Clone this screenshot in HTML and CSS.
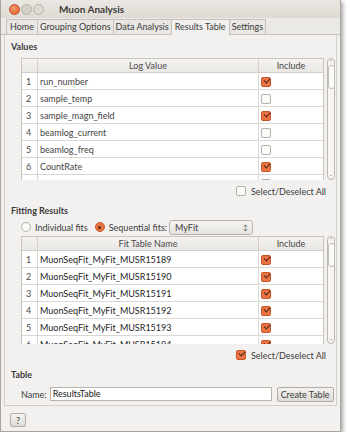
FILE: index.html
```html
<!DOCTYPE html>
<html lang="en">
<head>
  <meta charset="UTF-8">
  <title>Muon Analysis</title>
  <link rel="stylesheet" href="styles.css">
</head>
<body>
  <div class="window">
    <div class="titlebar">
      <span class="wbtn close"></span>
      <span class="wbtn"></span>
      <span class="wbtn max"></span>
      <span class="title">Muon Analysis</span>
    </div>

    <div class="tabs">
      <div class="tab">Home</div>
      <div class="tab">Grouping Options</div>
      <div class="tab">Data Analysis</div>
      <div class="tab active">Results Table</div>
      <div class="tab">Settings</div>
    </div>

    <div class="pane">
      <!-- Values -->
      <div class="group-title">Values</div>
      <div class="table-row values">
        <div class="tbl">
          <table class="data">
            <tr><th class="num"></th><th>Log Value</th><th class="inc">Include</th></tr>
            <tr><td class="num">1</td><td>run_number</td><td class="inc"><span class="cb on"></span></td></tr>
            <tr><td class="num">2</td><td>sample_temp</td><td class="inc"><span class="cb"></span></td></tr>
            <tr><td class="num">3</td><td>sample_magn_field</td><td class="inc"><span class="cb on"></span></td></tr>
            <tr><td class="num">4</td><td>beamlog_current</td><td class="inc"><span class="cb"></span></td></tr>
            <tr><td class="num">5</td><td>beamlog_freq</td><td class="inc"><span class="cb"></span></td></tr>
            <tr><td class="num">6</td><td>CountRate</td><td class="inc"><span class="cb on"></span></td></tr>
            <tr><td class="num">7</td><td>FieldGroupIndex</td><td class="inc"><span class="cb"></span></td></tr>
          </table>
        </div>
        <div class="scroll"><span class="arrow">&#710;</span><span class="thumb"></span><span class="arrow down">&#711;</span></div>
      </div>
      <div class="selall"><span class="cb"></span>Select/Deselect All</div>

      <!-- Fitting results -->
      <div class="group-title">Fitting Results</div>
      <div class="radios">
        <span class="radio"></span><span class="rlabel">Individual fits</span>
        <span class="radio on"></span><span class="rlabel">Sequential fits:</span>
        <span class="combo">MyFit<span class="spin">&#8597;</span></span>
      </div>
      <div class="table-row fits">
        <div class="tbl">
          <table class="data">
            <tr><th class="num"></th><th>Fit Table Name</th><th class="inc">Include</th></tr>
            <tr><td class="num">1</td><td class="dark">MuonSeqFit_MyFit_MUSR15189</td><td class="inc"><span class="cb on"></span></td></tr>
            <tr><td class="num">2</td><td class="dark">MuonSeqFit_MyFit_MUSR15190</td><td class="inc"><span class="cb on"></span></td></tr>
            <tr><td class="num">3</td><td class="dark">MuonSeqFit_MyFit_MUSR15191</td><td class="inc"><span class="cb on"></span></td></tr>
            <tr><td class="num">4</td><td class="dark">MuonSeqFit_MyFit_MUSR15192</td><td class="inc"><span class="cb on"></span></td></tr>
            <tr><td class="num">5</td><td class="dark">MuonSeqFit_MyFit_MUSR15193</td><td class="inc"><span class="cb on"></span></td></tr>
            <tr><td class="num">6</td><td class="dark">MuonSeqFit_MyFit_MUSR15194</td><td class="inc"><span class="cb on"></span></td></tr>
          </table>
        </div>
        <div class="scroll"><span class="arrow">&#710;</span><span class="thumb"></span><span class="arrow down">&#711;</span></div>
      </div>
      <div class="selall"><span class="cb on"></span>Select/Deselect All</div>

      <!-- Table -->
      <div class="group-title">Table</div>
      <div class="name-row">
        <span class="name-label">Name:</span>
        <span class="name-input">ResultsTable</span>
        <span class="btn">Create Table</span>
      </div>
    </div>

    <div class="footer">
      <span class="btn help">?</span>
    </div>
  </div>
</body>
</html>
```

FILE: styles.css
```css
body {
  margin: 0;
  background: #ffffff;
  font-family: Lato, "Open Sans", sans-serif;
  font-size: 9px;
  color: #3c3c3c;
}
.window {
  width: 341px;
  height: 432px;
  background: #f2f1f0;
  border: 1px solid #a9a59e;
  border-top: none;
  box-shadow: 2px 2px 4px rgba(0,0,0,0.35);
  box-sizing: border-box;
  display: flex;
  flex-direction: column;
  overflow: hidden;
}
.titlebar {
  height: 18px;
  display: flex;
  align-items: center;
  padding-left: 8px;
  background: linear-gradient(#ebe8e3, #dedad3);
}
.wbtn {
  width: 9px;
  height: 9px;
  border-radius: 50%;
  background: #d4d0c9;
  border: 1px solid #b8b3ab;
  margin-right: 1px;
}
.wbtn.close {
  background: radial-gradient(circle at 40% 35%, #f49a6c, #e0562a);
  border-color: #c44d25;
}
.wbtn.max {
  background: #ddd9d2;
}
.title {
  margin-left: 14px;
  font-weight: bold;
  font-size: 10px;
  color: #3c3b37;
}
.tabs {
  height: 16px;
  display: flex;
  align-items: flex-end;
  padding-left: 5px;
  border-bottom: 1px solid #c6c2bb;
  background: #ebe9e6;
}
.tab {
  height: 14px;
  line-height: 14px;
  padding: 0 2px;
  border: 1px solid #c6c2bb;
  border-bottom: none;
  border-left: none;
  background: #e9e7e3;
  color: #3c3c3c;
  white-space: nowrap;
}
.tab:first-child {
  border-left: 1px solid #c6c2bb;
  padding: 0 3px;
}
.tab.active {
  height: 15px;
  padding: 0 3px;
  background: #f2f1f0;
  margin-bottom: -1px;
  border-left: 1px solid #c6c2bb;
  margin-left: -1px;
}
.pane {
  margin: 0 3px;
  padding: 6px 0 0 6px;
  border-left: 1px solid #d3cfc8;
  border-right: 1px solid #d3cfc8;
  border-bottom: 1px solid #d3cfc8;
  height: 371px;
  box-sizing: border-box;
}
.group-title {
  font-weight: bold;
  height: 12px;
  line-height: 12px;
  color: #3c3c3c;
}
.table-row {
  display: flex;
  margin: 5px 0 0 10px;
}
.tbl {
  width: 303px;
  overflow: hidden;
  border: 1px solid #c9c5be;
  border-bottom: none;
  background: #fff;
  box-sizing: border-box;
}
.values .tbl { height: 122px; }
.fits .tbl { height: 108px; }
.data {
  width: 100%;
  border-collapse: collapse;
  table-layout: fixed;
}
.data th {
  height: 13px;
  font-weight: normal;
  background: linear-gradient(#f4f3f1, #e9e7e4);
  border-right: 1px solid #d3cfc8;
  border-bottom: 1px solid #d3cfc8;
  padding: 0;
  color: #4a4a4a;
}
.data td {
  height: 16px;
  padding: 0 0 0 2px;
  border-right: 1px solid #dbd8d3;
  border-bottom: 1px solid #dbd8d3;
  white-space: nowrap;
  overflow: hidden;
  color: #444;
}
.data td.dark { color: #1e1e1e; }
.data .num {
  width: 11px;
  padding-left: 4px;
  color: #4a4a4a;
}
.data th.num { padding: 0; width: 15px; }
.data .inc {
  width: 64px;
  border-right: none;
}
.cb {
  display: inline-block;
  width: 8px;
  height: 8px;
  border: 1px solid #b5b1aa;
  border-radius: 2px;
  background: #fbfbfa;
  vertical-align: middle;
  position: relative;
}
.cb.on {
  background: #ec7444;
  border-color: #c9562b;
}
.cb.on::after {
  content: "";
  position: absolute;
  left: 2px;
  top: 0;
  width: 5px;
  height: 3px;
  border-left: 1px solid #4a2a1a;
  border-bottom: 1px solid #4a2a1a;
  transform: rotate(-45deg);
}
.scroll {
  width: 6px;
  margin-left: 3px;
  border: 1px solid #bdb8b0;
  border-radius: 4px;
  background: #f6f5f4;
  display: flex;
  flex-direction: column;
  align-items: center;
  font-size: 6px;
  line-height: 5px;
  color: #777;
}
.scroll .thumb {
  width: 5px;
  height: 22px;
  border: 1px solid #c2bdb5;
  border-radius: 3px;
  background: #fbfbfa;
  margin: 1px 0;
}
.scroll .arrow.down {
  margin-top: auto;
}
.selall {
  display: flex;
  align-items: center;
  justify-content: flex-end;
  height: 18px;
  margin: 2px 10px 5px 0;
}
.selall .cb {
  margin-right: 5px;
}
.radios {
  display: flex;
  align-items: center;
  height: 16px;
  margin: 2px 0 0 10px;
}
.radio {
  width: 8px;
  height: 8px;
  border: 1px solid #b5b1aa;
  border-radius: 50%;
  background: #fbfbfa;
  margin-right: 4px;
  position: relative;
}
.radio.on {
  background: #ec7444;
  border-color: #c9562b;
}
.radio.on::after {
  content: "";
  position: absolute;
  left: 2.5px;
  top: 2.5px;
  width: 3px;
  height: 3px;
  border-radius: 50%;
  background: #5a2a15;
}
.rlabel {
  margin-right: 7px;
}
.combo {
  width: 84px;
  height: 15px;
  line-height: 13px;
  border: 1px solid #b9b4ac;
  border-radius: 3px;
  background: linear-gradient(#f6f5f3, #e5e2de);
  padding-left: 5px;
  box-sizing: border-box;
  display: flex;
  justify-content: space-between;
  margin-left: -5px;
}
.spin {
  font-size: 7px;
  color: #666;
  padding-right: 4px;
}
.fits {
  margin-top: 1px;
}
.name-row {
  display: flex;
  align-items: center;
  height: 16px;
  margin: 5px 0 0 10px;
}
.name-label {
  margin-right: 3px;
}
.name-input {
  width: 222px;
  height: 14px;
  line-height: 12px;
  border: 1px solid #b9b4ac;
  background: #fff;
  padding-left: 2px;
  box-sizing: border-box;
  color: #222;
}
.btn {
  display: inline-block;
  height: 15px;
  line-height: 13px;
  border: 1px solid #b1aca4;
  border-radius: 2px;
  background: linear-gradient(#f4f3f1, #dfdcd7);
  padding: 0 3px;
  box-sizing: border-box;
  color: #3c3c3c;
  margin-left: 5px;
  white-space: nowrap;
}
.footer {
  padding: 7px 0 0 9px;
}
.btn.help {
  margin-left: 0;
  width: 16px;
  height: 14px;
  text-align: center;
  padding: 0;
}
```
